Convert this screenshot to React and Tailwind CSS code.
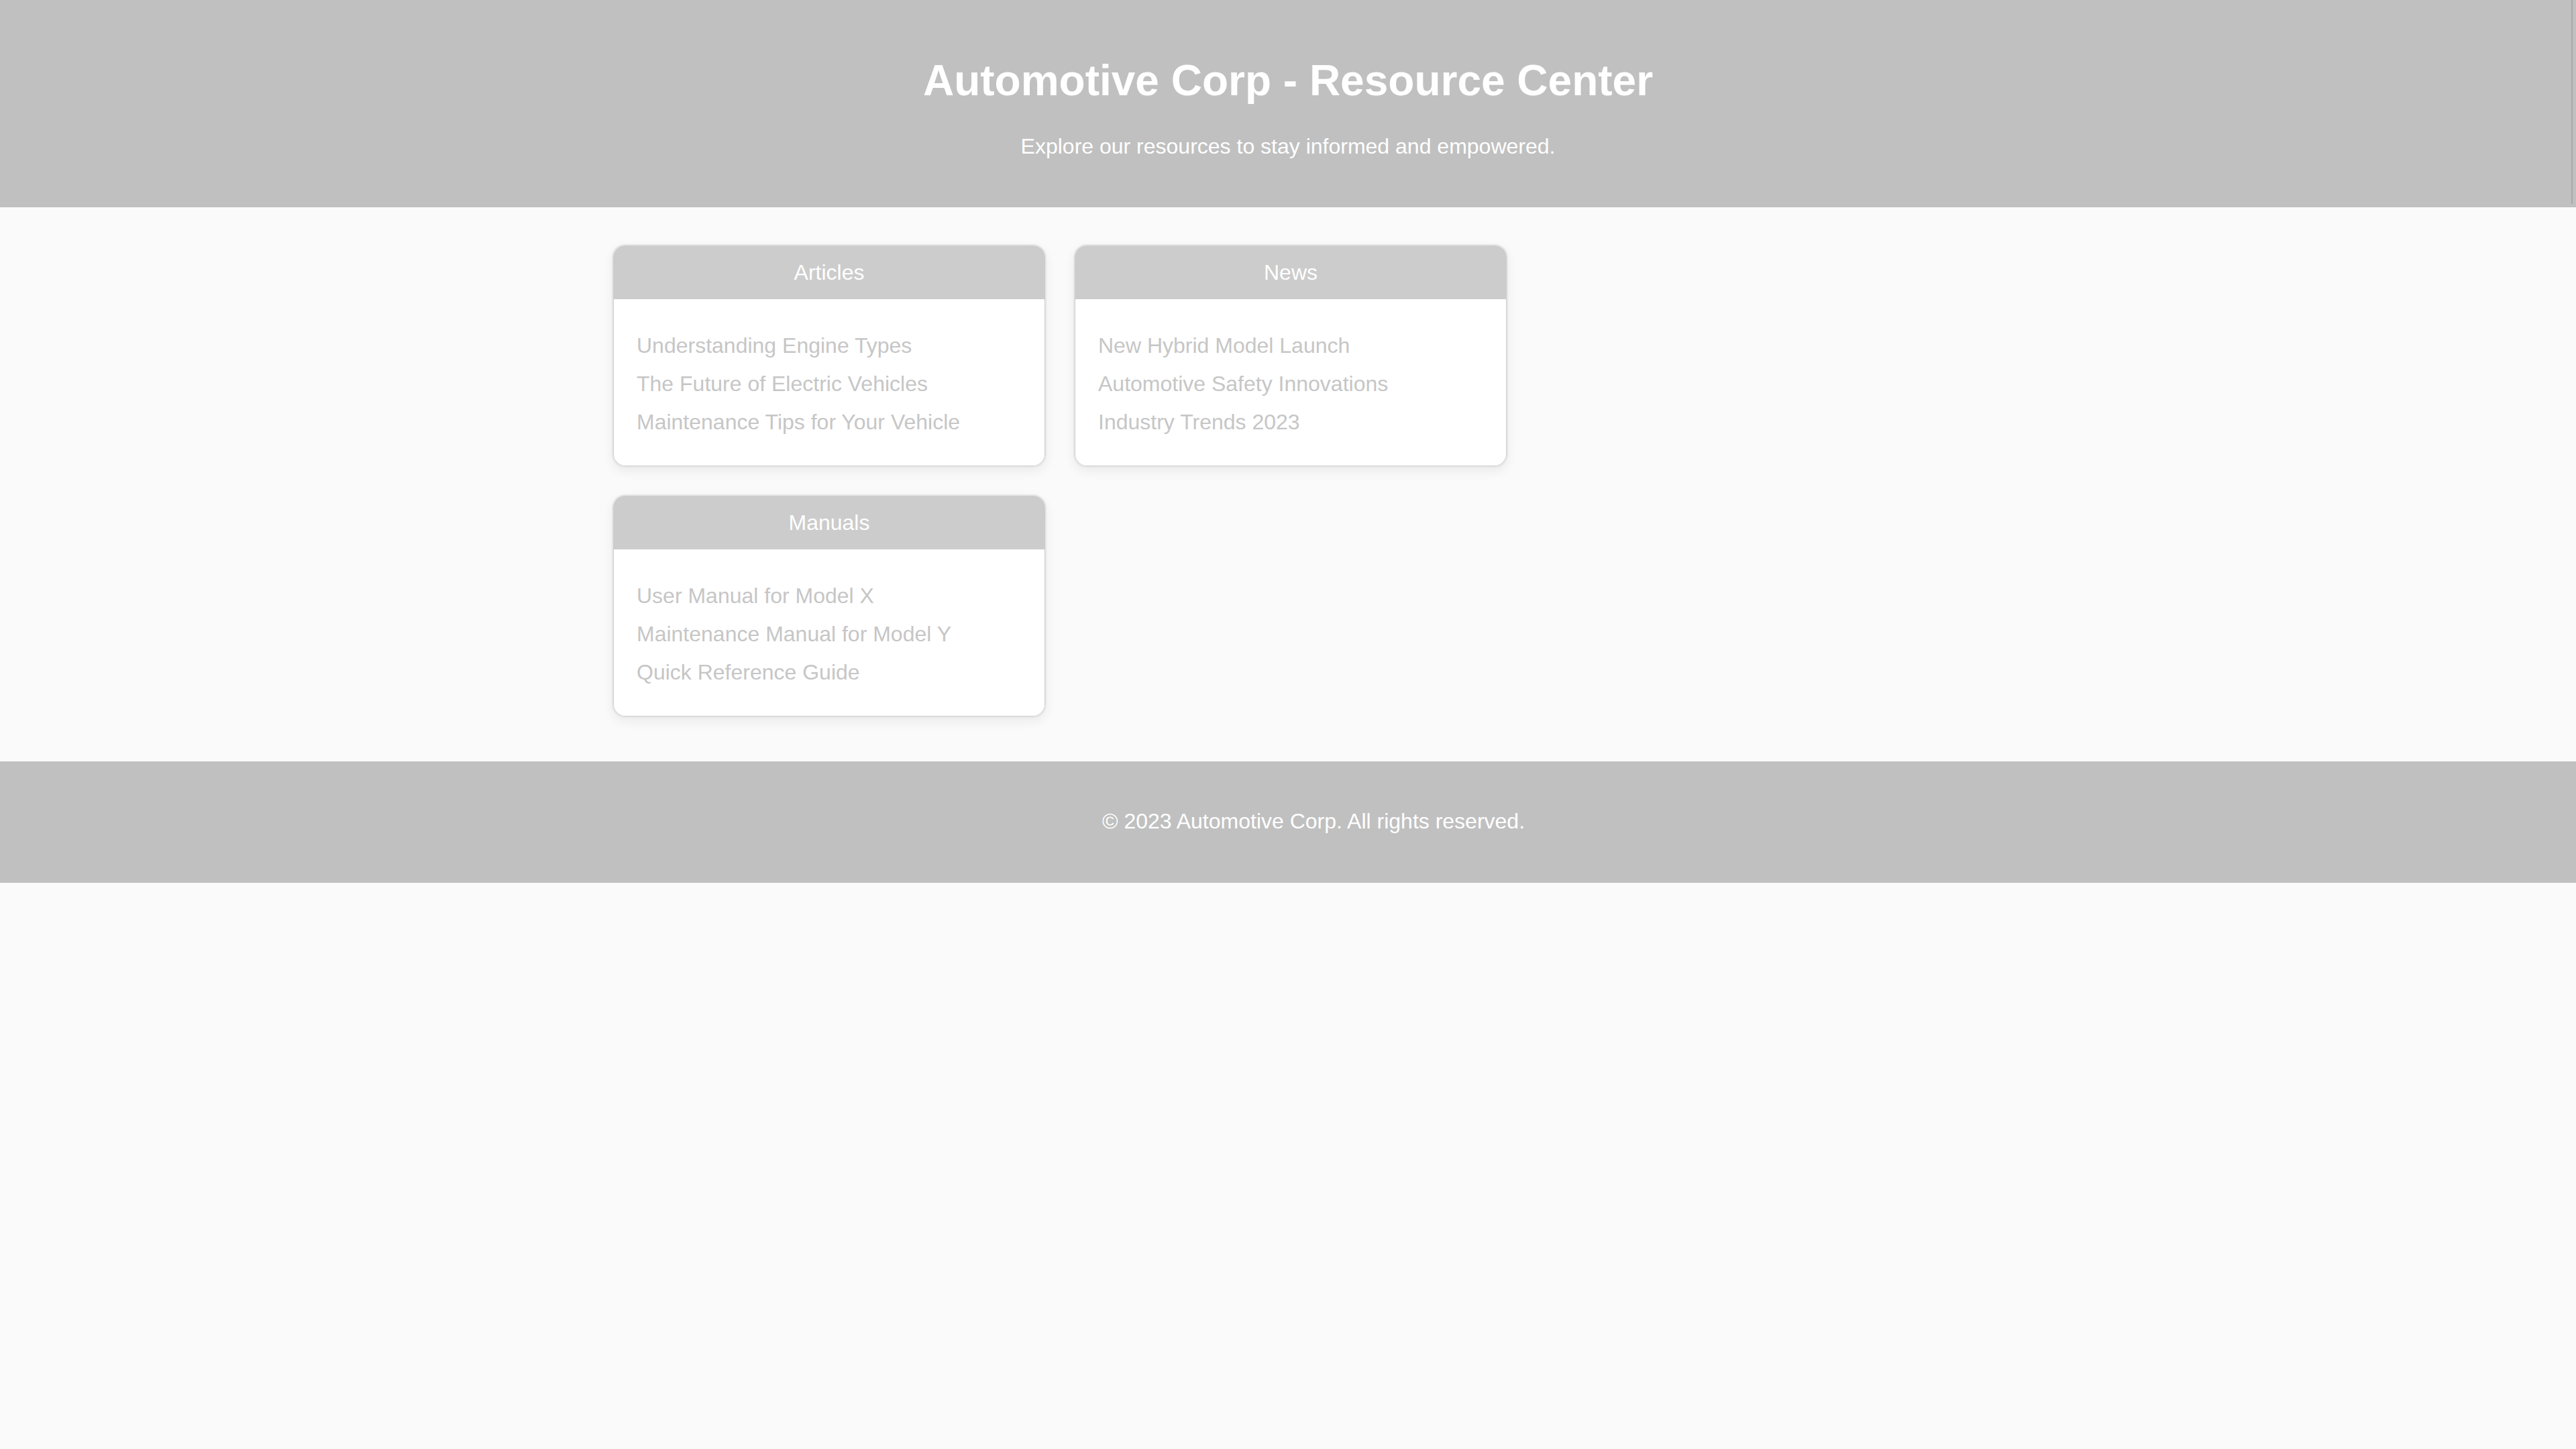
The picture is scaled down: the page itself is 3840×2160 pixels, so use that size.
import React from "react";

const sections = [
  {
    title: "Articles",
    items: [
      "Understanding Engine Types",
      "The Future of Electric Vehicles",
      "Maintenance Tips for Your Vehicle",
    ],
    place: "",
  },
  {
    title: "News",
    items: [
      "New Hybrid Model Launch",
      "Automotive Safety Innovations",
      "Industry Trends 2023",
    ],
    place: "",
  },
  {
    title: "Manuals",
    items: [
      "User Manual for Model X",
      "Maintenance Manual for Model Y",
      "Quick Reference Guide",
    ],
    place: "col-start-1",
  },
];

function Card({ title, items, place }) {
  return (
    <section
      className={`${place} flex flex-col overflow-hidden rounded-[20px] border-2 border-[#e6e6e6] bg-white shadow-[0_6px_16px_rgba(0,0,0,0.06)]`}
    >
      <h2 className="flex h-[80px] items-center justify-center bg-[#cccccc] text-[32px] leading-[38px] font-normal text-white">
        {title}
      </h2>
      <ul className="flex flex-col gap-[9px] border-x border-b border-[#cfcfcf] rounded-b-[18px] px-[34px] pt-[45px] pb-[41px]">
        {items.map((it) => (
          <li key={it} className="text-[32px] leading-[48px] text-[#c6c6c6]">
            {it}
          </li>
        ))}
      </ul>
    </section>
  );
}

export default function App() {
  return (
    <div
      className="min-h-screen bg-[#fafafa]"
      style={{ fontFamily: '"Liberation Sans", Arial, sans-serif' }}
    >
      <header className="relative flex flex-col items-center gap-[43px] bg-[#c0c0c0] pt-[83px] pb-[72px] text-center text-white">
        <h1 className="text-[64px] leading-[74px] font-bold">
          Automotive Corp - Resource Center
        </h1>
        <p className="text-[32px] leading-[37px]">
          Explore our resources to stay informed and empowered.
        </p>
        <span className="absolute top-0 right-[5px] h-[304px] w-[2px] bg-[#a9a9a9]" />
      </header>

      <main className="flex justify-center pl-[8px] pt-[55px] pb-[65px]">
        <div className="grid grid-cols-[repeat(3,648px)] gap-x-[40px] gap-y-[40px]">
          {sections.map((s) => (
            <Card key={s.title} {...s} />
          ))}
        </div>
      </main>

      <footer className="flex h-[181px] items-center justify-center bg-[#c0c0c0] pl-[76px] pb-[2px] text-white">
        <p className="text-[32px] leading-[37px]">
          © 2023 Automotive Corp. All rights reserved.
        </p>
      </footer>
    </div>
  );
}
